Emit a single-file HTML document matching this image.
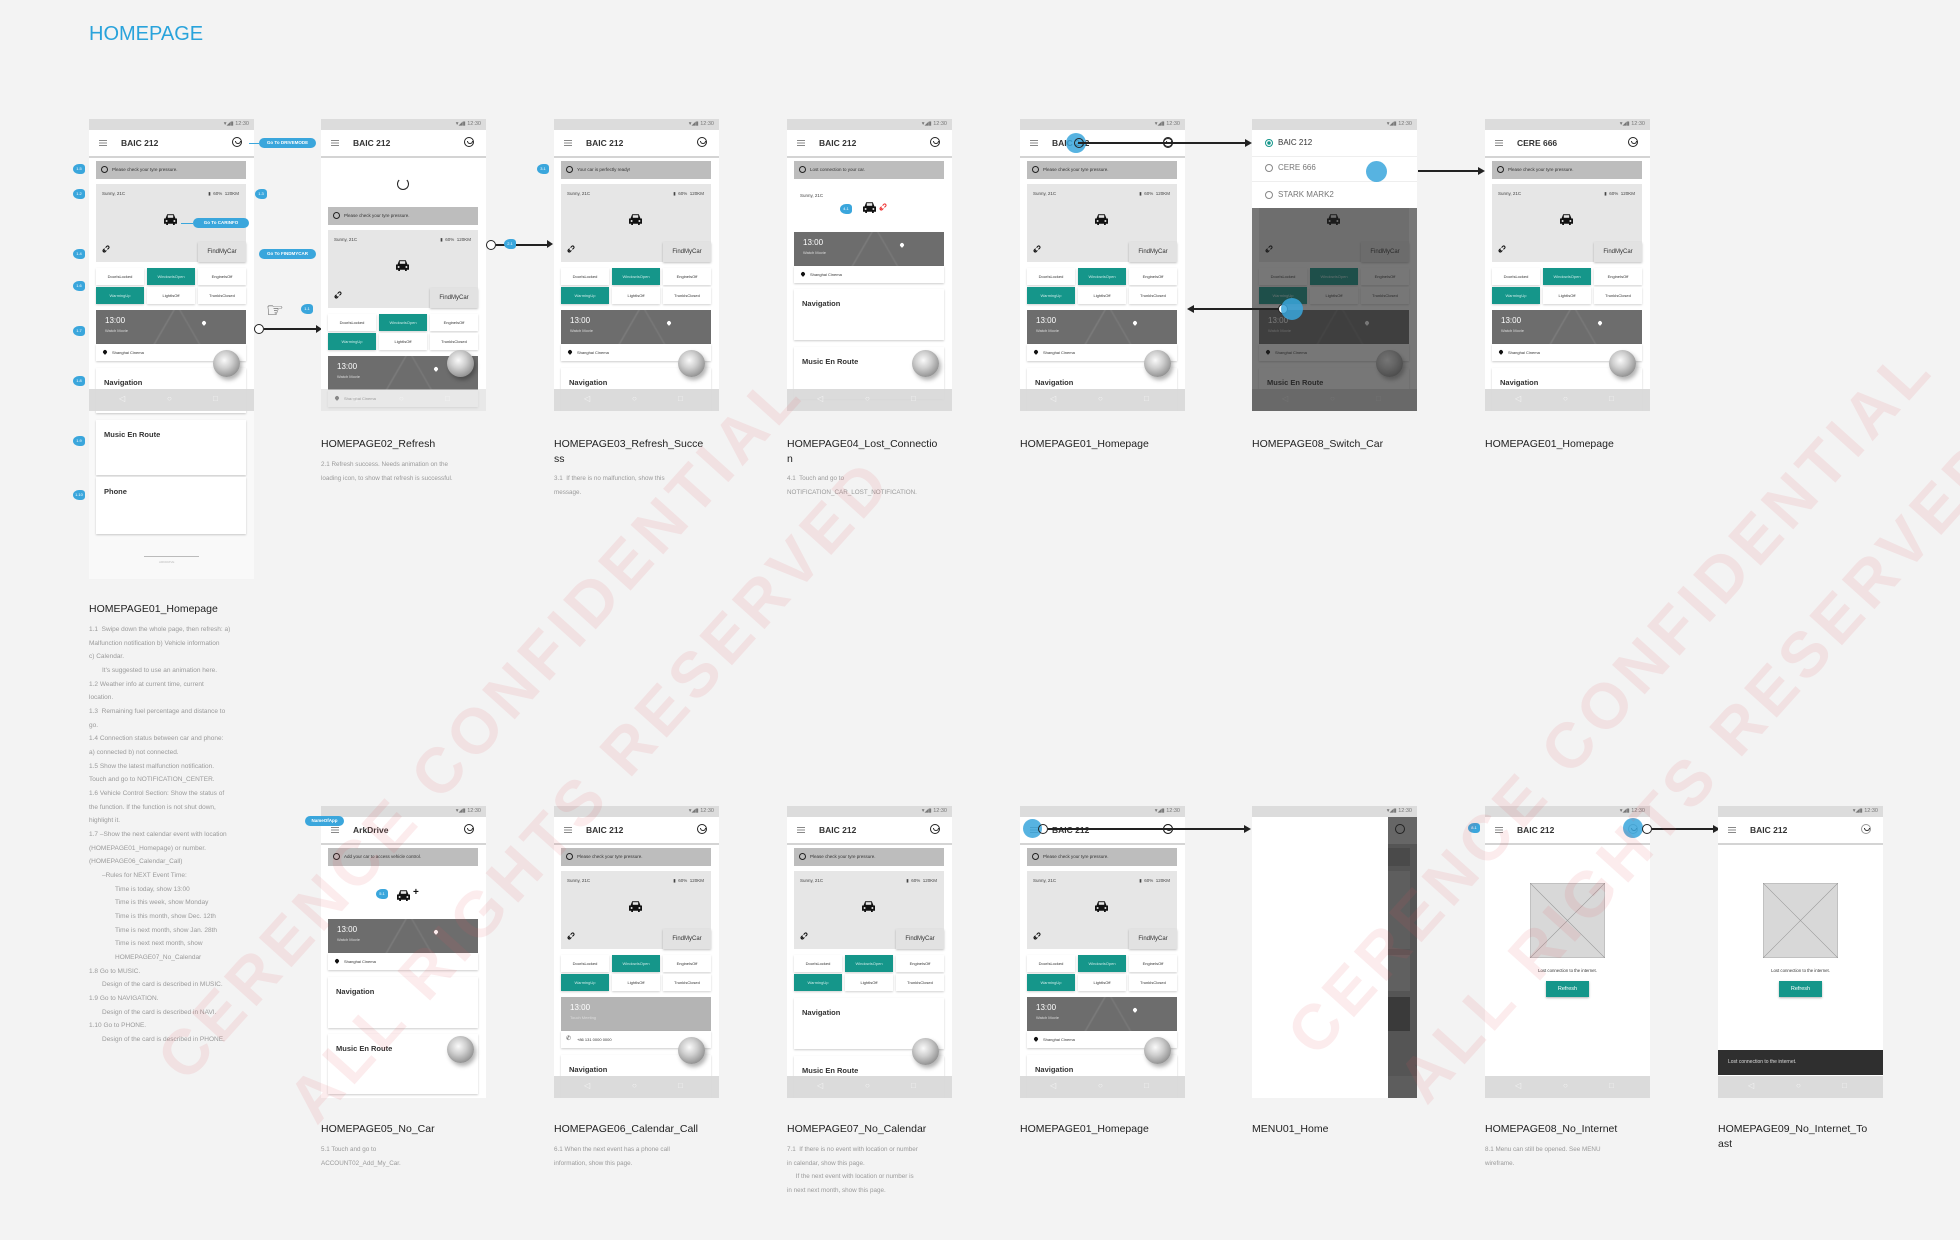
<!DOCTYPE html>
<html><head><meta charset="utf-8">
<style>
html,body{margin:0;padding:0}
body{width:1960px;height:1240px;background:#f3f3f3;font-family:"Liberation Sans",Arial,sans-serif;position:relative;overflow:hidden}
.abs{position:absolute}
.ph{position:absolute;width:165px;height:292px;background:#fff;overflow:hidden}
.ph>*{position:absolute}
.sb{left:0;top:0;width:165px;height:11px;background:#dcdcdc;font-size:5.5px;color:#777;text-align:right;line-height:11px;padding-right:5px;box-sizing:border-box}
.ab{left:0;top:11px;width:165px;height:26px;background:#fff;border-bottom:2px solid #d4d4d4}
.hm{position:absolute;left:10px;top:10px;width:8px;height:1px;background:#888;box-shadow:0 2.5px #888,0 5px #888}
.tt{position:absolute;left:32px;top:8px;font-size:8.5px;color:#333;font-weight:bold}
.st{position:absolute;left:143px;top:7px;width:8px;height:8px;border:1.5px solid #222;border-radius:50%}
.st:after{content:"";position:absolute;left:2px;top:2.5px;width:4px;height:2px;border:1px solid #222;border-top:none;border-radius:0 0 3px 3px}
.nt{left:7px;width:150px;height:18px;background:#bdbdbd;font-size:4.5px;color:#333;line-height:18px;padding-left:16px;box-sizing:border-box;white-space:nowrap}
.ic{position:absolute;left:5px;top:5px;width:5px;height:5px;border:1.2px solid #222;border-radius:50%}
.cc{left:7px;width:150px;height:78px;background:#e6e6e6}
.cc>*{position:absolute}
.w{left:6px;top:7px;font-size:4.5px;color:#444}
.f{right:7px;top:7px;font-size:4.5px;color:#444}
.car{left:67px;top:29px;width:15px;height:13px}
.lk{left:6px;top:61px;width:8px;height:8px}
.fm{right:0;bottom:0;width:48px;height:20px;background:#e2e2e2;box-shadow:0 1px 2px rgba(0,0,0,.25);font-size:6px;line-height:20px;text-align:center;color:#333}
.b{width:48px;height:17px;background:#fff;box-shadow:0 1px 2px rgba(0,0,0,.18);font-size:4px;line-height:17px;text-align:center;color:#333}
.b.on{background:#15968a;color:#cdebe8}
.cal{left:7px;width:150px;height:34px;background:#6d6d6d;color:#fff;background-image:linear-gradient(120deg,transparent 45%,rgba(255,255,255,.1) 46%,transparent 47%),linear-gradient(60deg,transparent 60%,rgba(255,255,255,.08) 61%,transparent 62%)}
.cal .t{position:absolute;left:9px;top:6px;font-size:8px}
.cal .s{position:absolute;left:9px;top:18px;font-size:4px;color:#ddd}
.pin{position:absolute;left:106px;top:11px;width:4px;height:4px;background:#fff;border-radius:50% 50% 50% 0;transform:rotate(-45deg)}
.loc{left:7px;width:150px;height:17px;background:#fff;box-shadow:0 1px 2px rgba(0,0,0,.2);font-size:4px;line-height:17px;padding-left:16px;box-sizing:border-box;color:#333}
.pk{position:absolute;left:7px;top:6px;width:4px;height:4px;background:#111;border-radius:50% 50% 50% 0;transform:rotate(-45deg)}
.card{left:7px;width:150px;background:#fff;box-shadow:0 1px 2px rgba(0,0,0,.2)}
.card b{position:absolute;left:8px;top:10px;font-size:7.5px;color:#333}
.ball{width:27px;height:27px;border-radius:50%;background:radial-gradient(circle at 42% 38%,#fafafa,#cfcfcf 35%,#999 70%,#6a6a6a);box-shadow:2px 3px 4px rgba(0,0,0,.3)}
.nb{left:0;width:165px;height:22px;background:rgba(216,216,216,.92)}
.nb span{position:absolute;top:5px;font-size:8px;color:#f4f4f4}
.cap{position:absolute;font-size:10.5px;color:#222;line-height:15px;white-space:nowrap}
.ds{position:absolute;font-size:6.3px;color:#9a9a9a;line-height:13.7px;white-space:nowrap}
.mk{position:absolute;width:12px;height:10px;background:#3aa6dc;border-radius:50% 30% 30% 50%;color:#fff;font-size:4px;line-height:10px;text-align:center}
.pill{position:absolute;height:10px;border-radius:5px;background:#3aa6dc;color:#fff;font-size:4.5px;line-height:10px;text-align:center;font-weight:bold}
.dot{position:absolute;border-radius:50%;background:rgba(58,166,220,.85)}
.ln{position:absolute;height:1.5px;background:#222}
.ar{position:absolute;width:0;height:0;border-top:4px solid transparent;border-bottom:4px solid transparent}
.oc{position:absolute;width:8px;height:8px;border:1.2px solid #222;border-radius:50%;background:#fff}
.wm{position:absolute;font-size:64px;font-weight:bold;color:rgba(225,80,95,.11);white-space:nowrap;letter-spacing:6px;transform:translate(-50%,-50%) rotate(-48deg);z-index:50}
.lt{position:absolute;left:89px;font-size:6.5px;color:#9a9a9a;white-space:nowrap}
</style></head><body>
<svg width="0" height="0" style="position:absolute">
<symbol id="car" viewBox="0 0 15 13"><path d="M2.5 5.5 4.2 1.2h6.6l1.7 4.3H14v5.3h-2.2V12H10V10.8H5V12H3.2v-1.2H1V5.5z" fill="#111"/><rect x="4.8" y="2.2" width="5.4" height="2.6" fill="#e6e6e6"/><circle cx="3.6" cy="8" r="1" fill="#e6e6e6"/><circle cx="11.4" cy="8" r="1" fill="#e6e6e6"/></symbol>
<symbol id="lk" viewBox="0 0 8 8"><path d="M1.5 6.5 3 5M3.6 2.6l1.4-1.4a1.3 1.3 0 0 1 1.8 1.8L5.4 4.4M4.4 5.4 3 6.8A1.3 1.3 0 0 1 1.2 5L2.6 3.6" stroke="#111" stroke-width="1" fill="none"/></symbol>
</svg>

<div class="abs" style="left:89px;top:23px;font-size:20px;color:#29a3db">HOMEPAGE</div>

<!-- ============ ROW 1 ============ -->
<!-- P1 -->
<div class="ph" style="left:89px;top:119px;height:460px;background:#f9f9f9">
<div class="sb">▾◢▮ 12:30</div>
<div class="ab"><i class="hm"></i><b class="tt">BAIC 212</b><i class="st"></i></div>
<div style="left:0;top:39px;width:165px;height:231px;background:#fff"></div>
<div class="nt" style="top:42px"><i class="ic"></i>Please check your tyre pressure.</div>
<div class="cc" style="top:65px"><span class="w">Sunny, 21C</span><span class="f">▮&nbsp; 60%&nbsp; 120KM</span><svg class="car"><use href="#car"/></svg><svg class="lk"><use href="#lk"/></svg><span class="fm">FindMyCar</span></div>
<div class="b" style="left:7px;top:149px">DoorIsLocked</div><div class="b on" style="left:58px;top:149px">WindowIsOpen</div><div class="b" style="left:109px;top:149px">EngineIsOff</div>
<div class="b on" style="left:7px;top:168px">WarmingUp</div><div class="b" style="left:58px;top:168px">LightIsOff</div><div class="b" style="left:109px;top:168px">TrunkIsClosed</div>
<div class="cal" style="top:191px"><span class="t">13:00</span><span class="s">Watch Movie</span><i class="pin"></i></div>
<div class="loc" style="top:225px"><i class="pk"></i>Shanghai Cinema</div>
<div class="card" style="top:249px;height:45px"><b>Navigation</b></div>
<div class="ball" style="left:124px;top:231px"></div>
<div class="nb" style="top:270px"><span style="left:30px">◁</span><span style="left:78px">○</span><span style="left:124px">□</span></div>
<div class="card" style="top:301px;height:55px"><b>Music En Route</b></div>
<div class="card" style="top:358px;height:57px"><b>Phone</b></div>
<div style="left:55px;top:437px;width:55px;height:1px;background:#bbb"></div>
<div style="left:70px;top:441px;font-size:3px;color:#bbb">ARKDRIVE</div>
</div>
<div class="cap" style="left:89px;top:602px">HOMEPAGE01_Homepage</div>
<div class="lt" style="top:626px">1.1&nbsp; Swipe down the whole page, then refresh: a)</div>
<div class="lt" style="top:640px">Malfunction notification b) Vehicle information</div>
<div class="lt" style="top:653px">c) Calendar.</div>
<div class="lt" style="top:667px;left:102px">It's suggested to use an animation here.</div>
<div class="lt" style="top:681px">1.2 Weather info at current time, current</div>
<div class="lt" style="top:694px">location.</div>
<div class="lt" style="top:708px">1.3&nbsp; Remaining fuel percentage and distance to</div>
<div class="lt" style="top:722px">go.</div>
<div class="lt" style="top:735px">1.4 Connection status between car and phone:</div>
<div class="lt" style="top:749px">a) connected b) not connected.</div>
<div class="lt" style="top:763px">1.5 Show the latest malfunction notification.</div>
<div class="lt" style="top:776px">Touch and go to NOTIFICATION_CENTER.</div>
<div class="lt" style="top:790px">1.6 Vehicle Control Section: Show the status of</div>
<div class="lt" style="top:804px">the function. If the function is not shut down,</div>
<div class="lt" style="top:817px">highlight it.</div>
<div class="lt" style="top:831px">1.7 –Show the next calendar event with location</div>
<div class="lt" style="top:845px">(HOMEPAGE01_Homepage) or number.</div>
<div class="lt" style="top:858px">(HOMEPAGE06_Calendar_Call)</div>
<div class="lt" style="top:872px;left:102px">–Rules for NEXT Event Time:</div>
<div class="lt" style="top:886px;left:115px">Time is today, show 13:00</div>
<div class="lt" style="top:899px;left:115px">Time is this week, show Monday</div>
<div class="lt" style="top:913px;left:115px">Time is this month, show Dec. 12th</div>
<div class="lt" style="top:927px;left:115px">Time is next month, show Jan. 28th</div>
<div class="lt" style="top:940px;left:115px">Time is next next month, show</div>
<div class="lt" style="top:954px;left:115px">HOMEPAGE07_No_Calendar</div>
<div class="lt" style="top:968px">1.8 Go to MUSIC.</div>
<div class="lt" style="top:981px;left:102px">Design of the card is described in MUSIC.</div>
<div class="lt" style="top:995px">1.9 Go to NAVIGATION.</div>
<div class="lt" style="top:1009px;left:102px">Design of the card is described in NAVI.</div>
<div class="lt" style="top:1022px">1.10 Go to PHONE.</div>
<div class="lt" style="top:1036px;left:102px">Design of the card is described in PHONE.</div>

<!-- P1 annotations -->
<div class="mk" style="left:73px;top:164px">1.5</div>
<div class="mk" style="left:73px;top:189px">1.2</div>
<div class="mk" style="left:73px;top:249px">1.4</div>
<div class="mk" style="left:73px;top:281px">1.6</div>
<div class="mk" style="left:73px;top:326px">1.7</div>
<div class="mk" style="left:73px;top:376px">1.8</div>
<div class="mk" style="left:73px;top:436px">1.9</div>
<div class="mk" style="left:73px;top:490px">1.10</div>
<div class="mk" style="left:255px;top:189px">1.3</div>
<div class="pill" style="left:259px;top:138px;width:57px">Go To DRIVEMODE</div>
<div class="ln" style="left:249px;top:143px;width:10px;background:#3aa6dc;height:1px"></div>
<div class="pill" style="left:193px;top:218px;width:56px">Go To CARINFO</div>
<div class="ln" style="left:181px;top:223px;width:12px;background:#3aa6dc;height:1px"></div>
<div class="pill" style="left:259px;top:249px;width:57px">Go To FINDMYCAR</div>
<div class="mk" style="left:301px;top:304px">1.1</div>
<div class="abs" style="left:266px;top:298px;font-size:20px;color:#333">☞</div>
<div class="oc" style="left:254px;top:324px"></div><div class="ln" style="left:264px;top:328px;width:52px"></div><div class="ar" style="left:316px;top:325px;border-left:6px solid #222"></div>

<!-- P2 refresh -->
<div class="ph" style="left:321px;top:119px">
<div class="sb">▾◢▮ 12:30</div>
<div class="ab"><i class="hm"></i><b class="tt">BAIC 212</b><i class="st"></i></div>
<div style="left:76px;top:59px;width:10px;height:10px;border:1.2px solid #222;border-top-color:transparent;border-radius:50%"></div>
<div class="nt" style="top:88px"><i class="ic"></i>Please check your tyre pressure.</div>
<div class="cc" style="top:111px"><span class="w">Sunny, 21C</span><span class="f">▮&nbsp; 60%&nbsp; 120KM</span><svg class="car"><use href="#car"/></svg><svg class="lk"><use href="#lk"/></svg><span class="fm">FindMyCar</span></div>
<div class="b" style="left:7px;top:195px">DoorIsLocked</div><div class="b on" style="left:58px;top:195px">WindowIsOpen</div><div class="b" style="left:109px;top:195px">EngineIsOff</div>
<div class="b on" style="left:7px;top:214px">WarmingUp</div><div class="b" style="left:58px;top:214px">LightIsOff</div><div class="b" style="left:109px;top:214px">TrunkIsClosed</div>
<div class="cal" style="top:237px"><span class="t">13:00</span><span class="s">Watch Movie</span><i class="pin"></i></div>
<div class="loc" style="top:271px"><i class="pk"></i>Shanghai Cinema</div>
<div class="ball" style="left:126px;top:231px"></div>
<div class="nb" style="top:270px;background:rgba(216,216,216,.6)"><span style="left:30px">◁</span><span style="left:78px">○</span><span style="left:124px">□</span></div>
</div>
<div class="cap" style="left:321px;top:437px">HOMEPAGE02_Refresh</div>
<div class="ds" style="left:321px;top:458px">2.1 Refresh success. Needs animation on the<br>loading icon, to show that refresh is successful.</div>
<div class="oc" style="left:486px;top:240px"></div><div class="ln" style="left:496px;top:244px;width:51px"></div><div class="ar" style="left:547px;top:240px;border-left:6px solid #222"></div>
<div class="mk" style="left:504px;top:239px">2.1</div>

<!-- P3 -->
<div class="ph" style="left:554px;top:119px">
<div class="sb">▾◢▮ 12:30</div>
<div class="ab"><i class="hm"></i><b class="tt">BAIC 212</b><i class="st"></i></div>
<div class="nt" style="top:42px"><i class="ic"></i>Your car is perfectly ready!</div>
<div class="cc" style="top:65px"><span class="w">Sunny, 21C</span><span class="f">▮&nbsp; 60%&nbsp; 120KM</span><svg class="car"><use href="#car"/></svg><svg class="lk"><use href="#lk"/></svg><span class="fm">FindMyCar</span></div>
<div class="b" style="left:7px;top:149px">DoorIsLocked</div><div class="b on" style="left:58px;top:149px">WindowIsOpen</div><div class="b" style="left:109px;top:149px">EngineIsOff</div>
<div class="b on" style="left:7px;top:168px">WarmingUp</div><div class="b" style="left:58px;top:168px">LightIsOff</div><div class="b" style="left:109px;top:168px">TrunkIsClosed</div>
<div class="cal" style="top:191px"><span class="t">13:00</span><span class="s">Watch Movie</span><i class="pin"></i></div>
<div class="loc" style="top:225px"><i class="pk"></i>Shanghai Cinema</div>
<div class="card" style="top:249px;height:45px"><b>Navigation</b></div>
<div class="ball" style="left:124px;top:231px"></div>
<div class="nb" style="top:270px"><span style="left:30px">◁</span><span style="left:78px">○</span><span style="left:124px">□</span></div>
</div>
<div class="mk" style="left:537px;top:164px">3.1</div>
<div class="cap" style="left:554px;top:437px">HOMEPAGE03_Refresh_Succe<br>ss</div>
<div class="ds" style="left:554px;top:472px">3.1&nbsp; If there is no malfunction, show this<br>message.</div>

<!-- P4 lost -->
<div class="ph" style="left:787px;top:119px">
<div class="sb">▾◢▮ 12:30</div>
<div class="ab"><i class="hm"></i><b class="tt">BAIC 212</b><i class="st"></i></div>
<div class="nt" style="top:42px"><i class="ic"></i>Lost connection to your car.</div>
<div style="left:13px;top:74px;font-size:4.5px;color:#444">Sunny, 21C</div>
<svg style="left:75px;top:82px;width:15px;height:13px"><use href="#car"/></svg>
<svg style="left:92px;top:84px;width:8px;height:8px" viewBox="0 0 8 8"><path d="M1.5 6.5 3 5M3.6 2.6l1.4-1.4a1.3 1.3 0 0 1 1.8 1.8L5.4 4.4M4.4 5.4 3 6.8A1.3 1.3 0 0 1 1.2 5L2.6 3.6" stroke="#e33" stroke-width="1" fill="none"/></svg>
<div class="cal" style="top:113px"><span class="t">13:00</span><span class="s">Watch Movie</span><i class="pin"></i></div>
<div class="loc" style="top:147px"><i class="pk"></i>Shanghai Cinema</div>
<div class="card" style="top:170px;height:51px"><b>Navigation</b></div>
<div class="card" style="top:228px;height:52px"><b>Music En Route</b></div>
<div class="ball" style="left:125px;top:231px"></div>
<div class="nb" style="top:270px"><span style="left:30px">◁</span><span style="left:78px">○</span><span style="left:124px">□</span></div>
</div>
<div class="mk" style="left:840px;top:204px">4.1</div>
<div class="cap" style="left:787px;top:437px">HOMEPAGE04_Lost_Connectio<br>n</div>
<div class="ds" style="left:787px;top:472px">4.1&nbsp; Touch and go to<br>NOTIFICATION_CAR_LOST_NOTIFICATION.</div>

<!-- P5 -->
<div class="ph" style="left:1020px;top:119px">
<div class="sb">▾◢▮ 12:30</div>
<div class="ab"><i class="hm"></i><b class="tt">BAIC 212</b><i class="st"></i></div>
<div class="nt" style="top:42px"><i class="ic"></i>Please check your tyre pressure.</div>
<div class="cc" style="top:65px"><span class="w">Sunny, 21C</span><span class="f">▮&nbsp; 60%&nbsp; 120KM</span><svg class="car"><use href="#car"/></svg><svg class="lk"><use href="#lk"/></svg><span class="fm">FindMyCar</span></div>
<div class="b" style="left:7px;top:149px">DoorIsLocked</div><div class="b on" style="left:58px;top:149px">WindowIsOpen</div><div class="b" style="left:109px;top:149px">EngineIsOff</div>
<div class="b on" style="left:7px;top:168px">WarmingUp</div><div class="b" style="left:58px;top:168px">LightIsOff</div><div class="b" style="left:109px;top:168px">TrunkIsClosed</div>
<div class="cal" style="top:191px"><span class="t">13:00</span><span class="s">Watch Movie</span><i class="pin"></i></div>
<div class="loc" style="top:225px"><i class="pk"></i>Shanghai Cinema</div>
<div class="card" style="top:249px;height:45px"><b>Navigation</b></div>
<div class="ball" style="left:124px;top:231px"></div>
<div class="nb" style="top:270px"><span style="left:30px">◁</span><span style="left:78px">○</span><span style="left:124px">□</span></div>
</div>
<div class="dot" style="left:1066px;top:133px;width:20px;height:20px"></div>
<div class="ln" style="left:1078px;top:142px;width:168px"></div><div class="ar" style="left:1245px;top:139px;border-left:7px solid #222"></div>
<div class="oc" style="left:1074px;top:138px;background:transparent"></div>
<div class="oc" style="left:1163px;top:138px;background:transparent"></div>
<div class="cap" style="left:1020px;top:437px">HOMEPAGE01_Homepage</div>

<!-- P6 switch -->
<div class="ph" style="left:1252px;top:119px">
<div class="sb">▾◢▮ 12:30</div>
<div class="nt" style="top:42px"><i class="ic"></i>Please check your tyre pressure.</div>
<div class="cc" style="top:65px"><span class="w">Sunny, 21C</span><span class="f">▮&nbsp; 60%&nbsp; 120KM</span><svg class="car"><use href="#car"/></svg><svg class="lk"><use href="#lk"/></svg><span class="fm">FindMyCar</span></div>
<div class="b" style="left:7px;top:149px">DoorIsLocked</div><div class="b on" style="left:58px;top:149px">WindowIsOpen</div><div class="b" style="left:109px;top:149px">EngineIsOff</div>
<div class="b on" style="left:7px;top:168px">WarmingUp</div><div class="b" style="left:58px;top:168px">LightIsOff</div><div class="b" style="left:109px;top:168px">TrunkIsClosed</div>
<div class="cal" style="top:191px"><span class="t">13:00</span><span class="s">Watch Movie</span><i class="pin"></i></div>
<div class="loc" style="top:225px"><i class="pk"></i>Shanghai Cinema</div>
<div class="card" style="top:249px;height:45px"><b>Music En Route</b></div>
<div class="ball" style="left:124px;top:231px"></div>
<div class="nb" style="top:270px"><span style="left:30px">◁</span><span style="left:78px">○</span><span style="left:124px">□</span></div>
<div style="left:0;top:11px;width:165px;height:78px;background:#fff"></div>
<div style="left:0;top:37px;width:165px;height:1px;background:#eee"></div>
<div style="left:0;top:62px;width:165px;height:1px;background:#eee"></div>
<div style="left:13px;top:20px;width:6px;height:6px;border:1.2px solid #15968a;border-radius:50%;background:radial-gradient(#15968a 40%,#fff 45%)"></div>
<div style="left:26px;top:19px;font-size:8px;color:#333">BAIC 212</div>
<div style="left:13px;top:45px;width:6px;height:6px;border:1.2px solid #888;border-radius:50%"></div>
<div style="left:26px;top:44px;font-size:8px;color:#777">CERE 666</div>
<div style="left:13px;top:72px;width:6px;height:6px;border:1.2px solid #888;border-radius:50%"></div>
<div style="left:26px;top:71px;font-size:8px;color:#777">STARK MARK2</div>
<div style="left:0;top:89px;width:165px;height:203px;background:rgba(35,35,35,.62)"></div>
</div>
<div class="dot" style="left:1366px;top:161px;width:21px;height:21px"></div>
<div class="ln" style="left:1418px;top:170px;width:60px"></div><div class="ar" style="left:1478px;top:167px;border-left:7px solid #222"></div>
<div class="ln" style="left:1193px;top:308px;width:90px"></div><div class="ar" style="left:1187px;top:305px;border-right:7px solid #222"></div>
<div class="oc" style="left:1278px;top:304px;background:#fff"></div>
<div class="dot" style="left:1281px;top:298px;width:22px;height:22px"></div>
<div class="cap" style="left:1252px;top:437px">HOMEPAGE08_Switch_Car</div>

<!-- P7 -->
<div class="ph" style="left:1485px;top:119px">
<div class="sb">▾◢▮ 12:30</div>
<div class="ab"><i class="hm"></i><b class="tt">CERE 666</b><i class="st"></i></div>
<div class="nt" style="top:42px"><i class="ic"></i>Please check your tyre pressure.</div>
<div class="cc" style="top:65px"><span class="w">Sunny, 21C</span><span class="f">▮&nbsp; 60%&nbsp; 120KM</span><svg class="car"><use href="#car"/></svg><svg class="lk"><use href="#lk"/></svg><span class="fm">FindMyCar</span></div>
<div class="b" style="left:7px;top:149px">DoorIsLocked</div><div class="b on" style="left:58px;top:149px">WindowIsOpen</div><div class="b" style="left:109px;top:149px">EngineIsOff</div>
<div class="b on" style="left:7px;top:168px">WarmingUp</div><div class="b" style="left:58px;top:168px">LightIsOff</div><div class="b" style="left:109px;top:168px">TrunkIsClosed</div>
<div class="cal" style="top:191px"><span class="t">13:00</span><span class="s">Watch Movie</span><i class="pin"></i></div>
<div class="loc" style="top:225px"><i class="pk"></i>Shanghai Cinema</div>
<div class="card" style="top:249px;height:45px"><b>Navigation</b></div>
<div class="ball" style="left:124px;top:231px"></div>
<div class="nb" style="top:270px"><span style="left:30px">◁</span><span style="left:78px">○</span><span style="left:124px">□</span></div>
</div>
<div class="cap" style="left:1485px;top:437px">HOMEPAGE01_Homepage</div>

<!-- ============ ROW 2 ============ -->
<!-- B1 no car -->
<div class="ph" style="left:321px;top:806px">
<div class="sb">▾◢▮ 12:30</div>
<div class="ab"><i class="hm"></i><b class="tt">ArkDrive</b><i class="st"></i></div>
<div class="nt" style="top:42px"><i class="ic"></i>Add your car to access vehicle control.</div>
<svg style="left:75px;top:83px;width:15px;height:13px"><use href="#car"/></svg>
<div style="left:92px;top:81px;font-size:10px;font-weight:bold;color:#111">+</div>
<div class="cal" style="top:113px"><span class="t">13:00</span><span class="s">Watch Movie</span><i class="pin"></i></div>
<div class="loc" style="top:147px"><i class="pk"></i>Shanghai Cinema</div>
<div class="card" style="top:171px;height:51px"><b>Navigation</b></div>
<div class="card" style="top:228px;height:60px"><b>Music En Route</b></div>
<div class="ball" style="left:126px;top:230px"></div>
</div>
<div class="pill" style="left:305px;top:816px;width:39px">NameOfApp</div>
<div class="mk" style="left:376px;top:889px">5.1</div>
<div class="cap" style="left:321px;top:1122px">HOMEPAGE05_No_Car</div>
<div class="ds" style="left:321px;top:1143px">5.1 Touch and go to<br>ACCOUNT02_Add_My_Car.</div>

<!-- B2 calendar call -->
<div class="ph" style="left:554px;top:806px">
<div class="sb">▾◢▮ 12:30</div>
<div class="ab"><i class="hm"></i><b class="tt">BAIC 212</b><i class="st"></i></div>
<div class="nt" style="top:42px"><i class="ic"></i>Please check your tyre pressure.</div>
<div class="cc" style="top:65px"><span class="w">Sunny, 21C</span><span class="f">▮&nbsp; 60%&nbsp; 120KM</span><svg class="car"><use href="#car"/></svg><svg class="lk"><use href="#lk"/></svg><span class="fm">FindMyCar</span></div>
<div class="b" style="left:7px;top:149px">DoorIsLocked</div><div class="b on" style="left:58px;top:149px">WindowIsOpen</div><div class="b" style="left:109px;top:149px">EngineIsOff</div>
<div class="b on" style="left:7px;top:168px">WarmingUp</div><div class="b" style="left:58px;top:168px">LightIsOff</div><div class="b" style="left:109px;top:168px">TrunkIsClosed</div>
<div class="cal" style="top:191px;background:#b4b4b4"><span class="t">13:00</span><span class="s">Touch Meeting</span></div>
<div class="loc" style="top:225px"><span style="position:absolute;left:5px;top:0;font-size:6px">✆</span>+86 131 0000 0000</div>
<div class="card" style="top:249px;height:45px"><b>Navigation</b></div>
<div class="ball" style="left:124px;top:231px"></div>
<div class="nb" style="top:270px"><span style="left:30px">◁</span><span style="left:78px">○</span><span style="left:124px">□</span></div>
</div>
<div class="cap" style="left:554px;top:1122px">HOMEPAGE06_Calendar_Call</div>
<div class="ds" style="left:554px;top:1143px">6.1 When the next event has a phone call<br>information, show this page.</div>

<!-- B3 no calendar -->
<div class="ph" style="left:787px;top:806px">
<div class="sb">▾◢▮ 12:30</div>
<div class="ab"><i class="hm"></i><b class="tt">BAIC 212</b><i class="st"></i></div>
<div class="nt" style="top:42px"><i class="ic"></i>Please check your tyre pressure.</div>
<div class="cc" style="top:65px"><span class="w">Sunny, 21C</span><span class="f">▮&nbsp; 60%&nbsp; 120KM</span><svg class="car"><use href="#car"/></svg><svg class="lk"><use href="#lk"/></svg><span class="fm">FindMyCar</span></div>
<div class="b" style="left:7px;top:149px">DoorIsLocked</div><div class="b on" style="left:58px;top:149px">WindowIsOpen</div><div class="b" style="left:109px;top:149px">EngineIsOff</div>
<div class="b on" style="left:7px;top:168px">WarmingUp</div><div class="b" style="left:58px;top:168px">LightIsOff</div><div class="b" style="left:109px;top:168px">TrunkIsClosed</div>
<div class="card" style="top:192px;height:51px"><b>Navigation</b></div>
<div class="card" style="top:250px;height:45px"><b>Music En Route</b></div>
<div class="ball" style="left:125px;top:232px"></div>
<div class="nb" style="top:270px"><span style="left:30px">◁</span><span style="left:78px">○</span><span style="left:124px">□</span></div>
</div>
<div class="cap" style="left:787px;top:1122px">HOMEPAGE07_No_Calendar</div>
<div class="ds" style="left:787px;top:1143px">7.1&nbsp; If there is no event with location or number<br>in calendar, show this page.<br>&nbsp;&nbsp;&nbsp;&nbsp;&nbsp;If the next event with location or number is<br>in next next month, show this page.</div>

<!-- B4 homepage -->
<div class="ph" style="left:1020px;top:806px">
<div class="sb">▾◢▮ 12:30</div>
<div class="ab"><i class="hm"></i><b class="tt">BAIC 212</b><i class="st"></i></div>
<div class="nt" style="top:42px"><i class="ic"></i>Please check your tyre pressure.</div>
<div class="cc" style="top:65px"><span class="w">Sunny, 21C</span><span class="f">▮&nbsp; 60%&nbsp; 120KM</span><svg class="car"><use href="#car"/></svg><svg class="lk"><use href="#lk"/></svg><span class="fm">FindMyCar</span></div>
<div class="b" style="left:7px;top:149px">DoorIsLocked</div><div class="b on" style="left:58px;top:149px">WindowIsOpen</div><div class="b" style="left:109px;top:149px">EngineIsOff</div>
<div class="b on" style="left:7px;top:168px">WarmingUp</div><div class="b" style="left:58px;top:168px">LightIsOff</div><div class="b" style="left:109px;top:168px">TrunkIsClosed</div>
<div class="cal" style="top:191px"><span class="t">13:00</span><span class="s">Watch Movie</span><i class="pin"></i></div>
<div class="loc" style="top:225px"><i class="pk"></i>Shanghai Cinema</div>
<div class="card" style="top:249px;height:45px"><b>Navigation</b></div>
<div class="ball" style="left:124px;top:231px"></div>
<div class="nb" style="top:270px"><span style="left:30px">◁</span><span style="left:78px">○</span><span style="left:124px">□</span></div>
</div>
<div class="dot" style="left:1023px;top:819px;width:19px;height:19px"></div>
<div class="oc" style="left:1038px;top:824px;background:transparent"></div>
<div class="ln" style="left:1048px;top:828px;width:196px"></div><div class="ar" style="left:1244px;top:825px;border-left:7px solid #222"></div>
<div class="oc" style="left:1163px;top:824px;background:transparent"></div>
<div class="cap" style="left:1020px;top:1122px">HOMEPAGE01_Homepage</div>

<!-- B5 menu -->
<div class="ph" style="left:1252px;top:806px;background:#555">
<div class="sb">▾◢▮ 12:30</div>
<div style="left:136px;top:11px;width:29px;height:27px;background:#666"></div>
<div style="left:143px;top:18px;width:8px;height:8px;border:1.5px solid #222;border-radius:50%"></div>
<div style="left:136px;top:42px;width:22px;height:18px;background:#4a4a4a"></div>
<div style="left:136px;top:65px;width:22px;height:78px;background:#5e5e5e"></div>
<div style="left:136px;top:149px;width:22px;height:36px;background:#606060"></div>
<div style="left:136px;top:191px;width:22px;height:34px;background:#3a3a3a"></div>
<div style="left:0;top:270px;width:165px;height:22px;background:#5d5d5d"></div>
<div style="left:0;top:11px;width:136px;height:281px;background:#fff"></div>
</div>
<div class="cap" style="left:1252px;top:1122px">MENU01_Home</div>

<!-- B6 no internet -->
<div class="ph" style="left:1485px;top:806px">
<div class="sb">▾◢▮ 12:30</div>
<div class="ab"><i class="hm"></i><b class="tt">BAIC 212</b><i class="st" style="border-color:#999"></i></div>
<svg style="left:45px;top:77px;width:75px;height:75px" viewBox="0 0 75 75"><rect width="75" height="75" fill="#d8d8d8" stroke="#aaa" stroke-width="1"/><path d="M0 0 75 75M75 0 0 75" stroke="#999" stroke-width=".6"/></svg>
<div style="left:0;top:162px;width:165px;text-align:center;font-size:4.3px;color:#333">Lost connection to the internet.</div>
<div style="left:61px;top:175px;width:43px;height:16px;background:#15968a;color:#fff;font-size:5.5px;line-height:16px;text-align:center;box-shadow:0 1px 2px rgba(0,0,0,.3)">Refresh</div>
<div class="nb" style="top:270px"><span style="left:30px">◁</span><span style="left:78px">○</span><span style="left:124px">□</span></div>
</div>
<div class="mk" style="left:1468px;top:823px">8.1</div>
<div class="dot" style="left:1623px;top:818px;width:20px;height:20px"></div>
<div class="oc" style="left:1642px;top:824px"></div>
<div class="ln" style="left:1652px;top:828px;width:61px"></div><div class="ar" style="left:1713px;top:825px;border-left:7px solid #222"></div>
<div class="cap" style="left:1485px;top:1122px">HOMEPAGE08_No_Internet</div>
<div class="ds" style="left:1485px;top:1143px">8.1 Menu can still be opened. See MENU<br>wireframe.</div>

<!-- B7 toast -->
<div class="ph" style="left:1718px;top:806px">
<div class="sb">▾◢▮ 12:30</div>
<div class="ab"><i class="hm"></i><b class="tt">BAIC 212</b><i class="st" style="border-color:#999"></i></div>
<svg style="left:45px;top:77px;width:75px;height:75px" viewBox="0 0 75 75"><rect width="75" height="75" fill="#d8d8d8" stroke="#aaa" stroke-width="1"/><path d="M0 0 75 75M75 0 0 75" stroke="#999" stroke-width=".6"/></svg>
<div style="left:0;top:162px;width:165px;text-align:center;font-size:4.3px;color:#333">Lost connection to the internet.</div>
<div style="left:61px;top:175px;width:43px;height:16px;background:#15968a;color:#fff;font-size:5.5px;line-height:16px;text-align:center;box-shadow:0 1px 2px rgba(0,0,0,.3)">Refresh</div>
<div class="nb" style="top:270px"><span style="left:30px">◁</span><span style="left:78px">○</span><span style="left:124px">□</span></div>
<div style="left:0;top:244px;width:165px;height:25px;background:#2f2f2f;color:#ddd;font-size:5px;line-height:25px;padding-left:10px;box-sizing:border-box">Lost connection to the internet.</div>
</div>
<div class="cap" style="left:1718px;top:1122px">HOMEPAGE09_No_Internet_To<br>ast</div>

<!-- watermarks -->
<div class="wm" style="left:480px;top:725px">CERENCE CONFIDENTIAL</div>
<div class="wm" style="left:590px;top:790px">ALL RIGHTS RESERVED</div>
<div class="wm" style="left:1610px;top:700px">CERENCE CONFIDENTIAL</div>
<div class="wm" style="left:1700px;top:770px">ALL RIGHTS RESERVED</div>
</body></html>
